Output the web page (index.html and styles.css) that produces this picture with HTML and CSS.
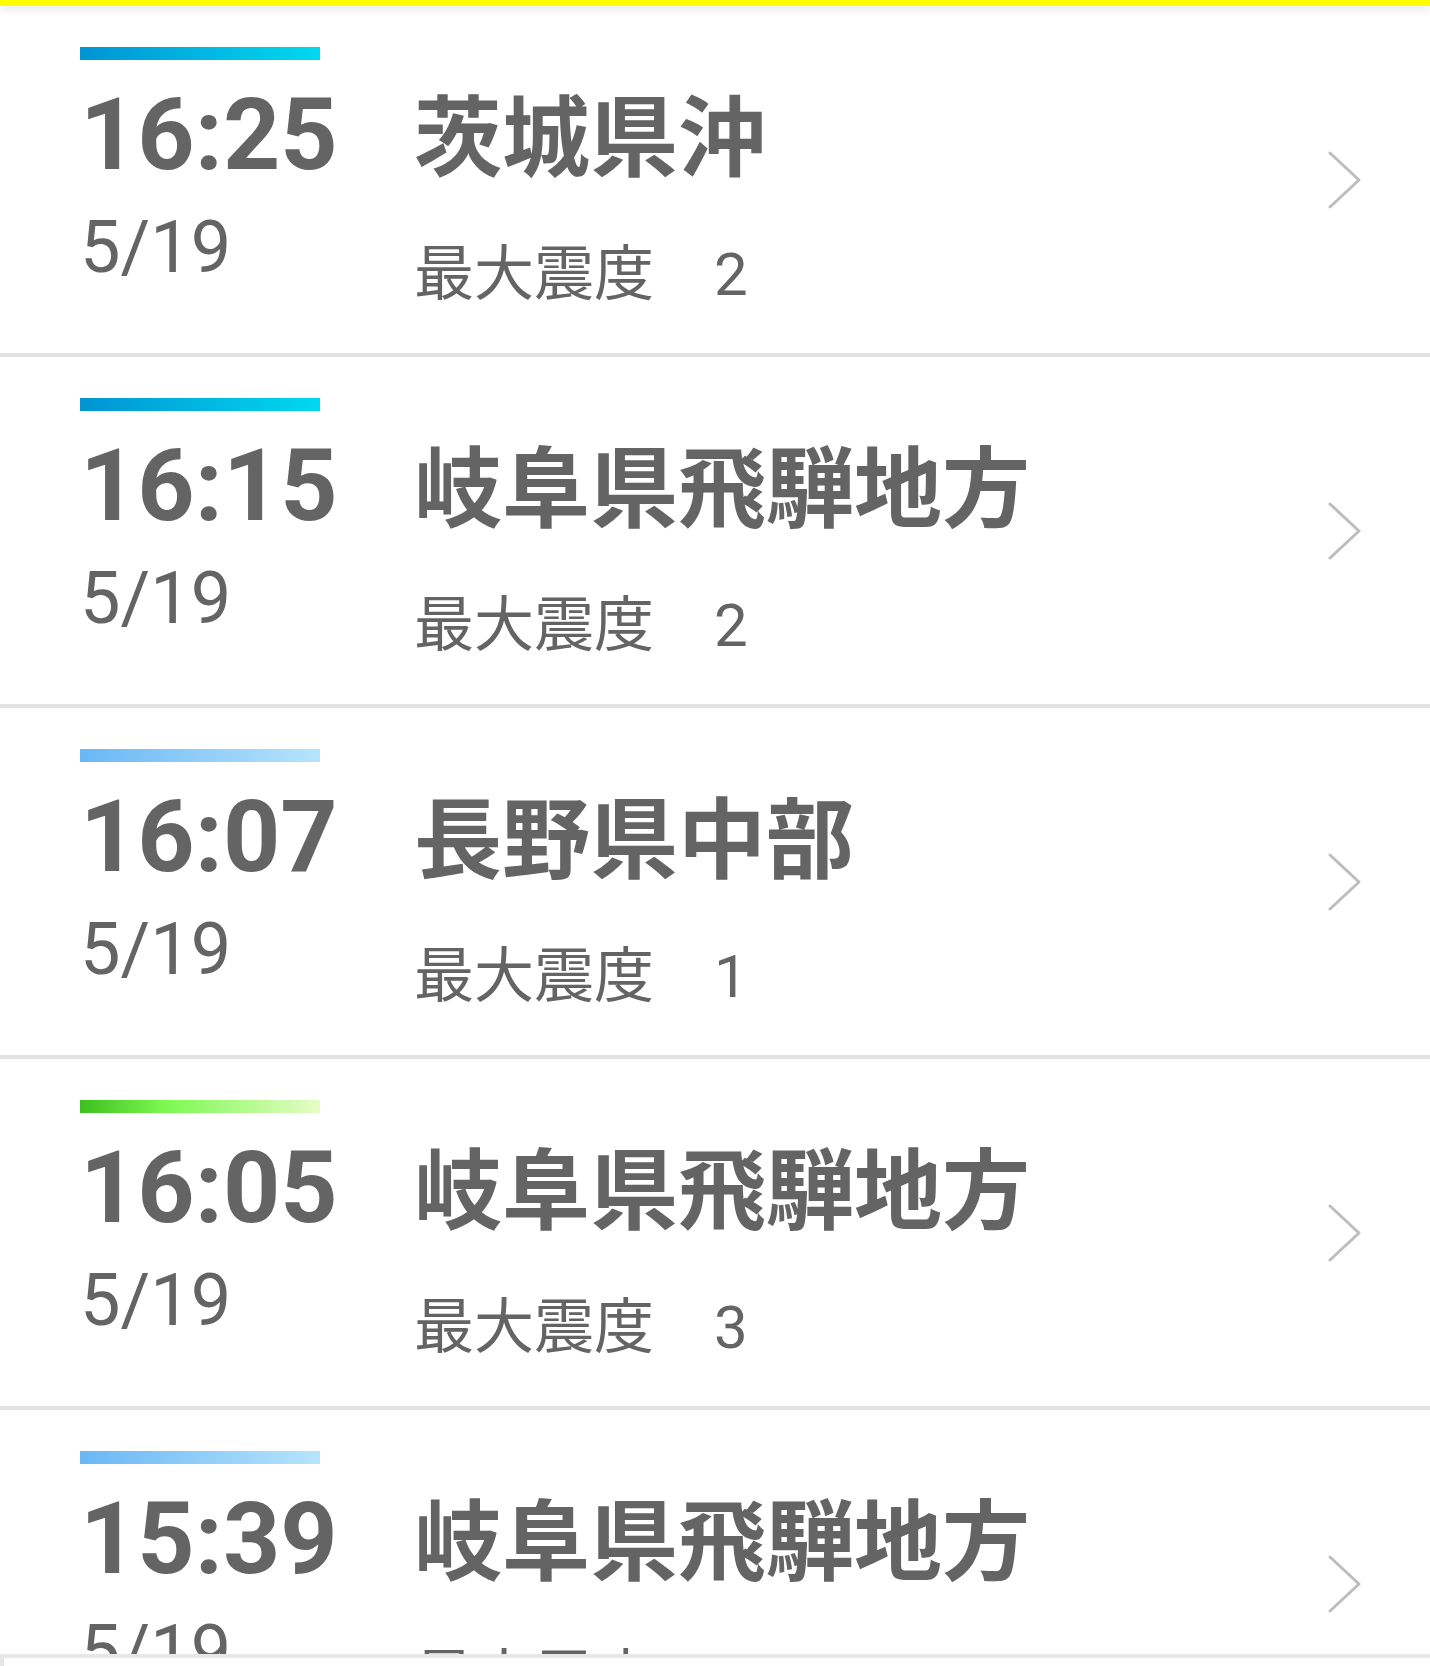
FILE: index.html
```html
<!DOCTYPE html>
<html lang="ja">
<head>
  <meta charset="UTF-8" />
  <title>地震情報</title>
  <link rel="stylesheet" href="styles.css">
</head>
<body>

<div class="topbar"></div>

<div class="list">
  <div class="row">
    <div class="when">
      <div class="bar lvl2"></div>
      <div class="time">16:25</div>
      <div class="date">5/19</div>
    </div>
    <div class="what">
      <div class="place">茨城県沖</div>
      <div class="shindo">最大震度　2</div>
    </div>
    <svg class="chevron" width="36" height="60" viewBox="0 0 36 60"><path d="M3 3 L32 30 L3 57" /></svg>
  </div>

  <div class="row">
    <div class="when">
      <div class="bar lvl2"></div>
      <div class="time">16:15</div>
      <div class="date">5/19</div>
    </div>
    <div class="what">
      <div class="place">岐阜県飛騨地方</div>
      <div class="shindo">最大震度　2</div>
    </div>
    <svg class="chevron" width="36" height="60" viewBox="0 0 36 60"><path d="M3 3 L32 30 L3 57" /></svg>
  </div>

  <div class="row">
    <div class="when">
      <div class="bar lvl1"></div>
      <div class="time">16:07</div>
      <div class="date">5/19</div>
    </div>
    <div class="what">
      <div class="place">長野県中部</div>
      <div class="shindo">最大震度　1</div>
    </div>
    <svg class="chevron" width="36" height="60" viewBox="0 0 36 60"><path d="M3 3 L32 30 L3 57" /></svg>
  </div>

  <div class="row">
    <div class="when">
      <div class="bar lvl3"></div>
      <div class="time">16:05</div>
      <div class="date">5/19</div>
    </div>
    <div class="what">
      <div class="place">岐阜県飛騨地方</div>
      <div class="shindo">最大震度　3</div>
    </div>
    <svg class="chevron" width="36" height="60" viewBox="0 0 36 60"><path d="M3 3 L32 30 L3 57" /></svg>
  </div>

  <div class="row">
    <div class="when">
      <div class="bar lvl1"></div>
      <div class="time">15:39</div>
      <div class="date">5/19</div>
    </div>
    <div class="what">
      <div class="place">岐阜県飛騨地方</div>
      <div class="shindo">最大震度　1</div>
    </div>
    <svg class="chevron" width="36" height="60" viewBox="0 0 36 60"><path d="M3 3 L32 30 L3 57" /></svg>
  </div>
</div>

<div class="bottombar"></div>

</body>
</html>
```

FILE: styles.css
```css
html, body {
  height: 100%;
}

body {
  margin: 0;
  padding: 0;
  background: white;
  color: #646464;
  font-family: Roboto, "Noto Sans CJK JP", sans-serif;
  overflow: hidden;
}

.topbar {
  position: relative;
  z-index: 1;
  height: 6px;
  background: #ffff00;
  box-shadow: 0 3px 10px rgba(0, 0, 0, 0.12);
}

.row {
  display: flex;
  height: 347px;
  border-bottom: 4px solid #e2e2e2;
  padding-left: 80px;
  padding-right: 67px;
}

.when {
  width: 334px;
  padding-top: 41px;
}

.bar {
  width: 240px;
  height: 13px;
}

.lvl1 {
  background: linear-gradient(to right, #6ab7f5, #b6e4fc);
}

.lvl2 {
  background: linear-gradient(to right, #0094d4, #00d8ef);
}

.lvl3 {
  background: linear-gradient(to right, #3cbf1e, #7cf850 35%, #e6fcc8);
}

.time {
  margin-top: 15px;
  font-size: 100px;
  font-weight: bold;
  line-height: 120px;
}

.date {
  margin-top: 13px;
  font-size: 72px;
  line-height: 80px;
}

.what {
  flex: 1;
  padding-top: 73px;
}

.place {
  font-size: 88px;
  font-weight: bold;
  line-height: 120px;
  white-space: nowrap;
}

.shindo {
  margin-top: 36px;
  font-size: 60px;
  line-height: 80px;
  white-space: nowrap;
}

.chevron {
  align-self: center;
  fill: none;
  stroke: #bdbdbd;
  stroke-width: 3;
  stroke-linecap: round;
  stroke-linejoin: round;
}

.bottombar {
  position: fixed;
  left: 0;
  right: 0;
  bottom: 0;
  height: 8px;
  background: white;
  border-top: 4px solid #e5e7e9;
  border-left: 4px solid #e5e7e9;
}
```
